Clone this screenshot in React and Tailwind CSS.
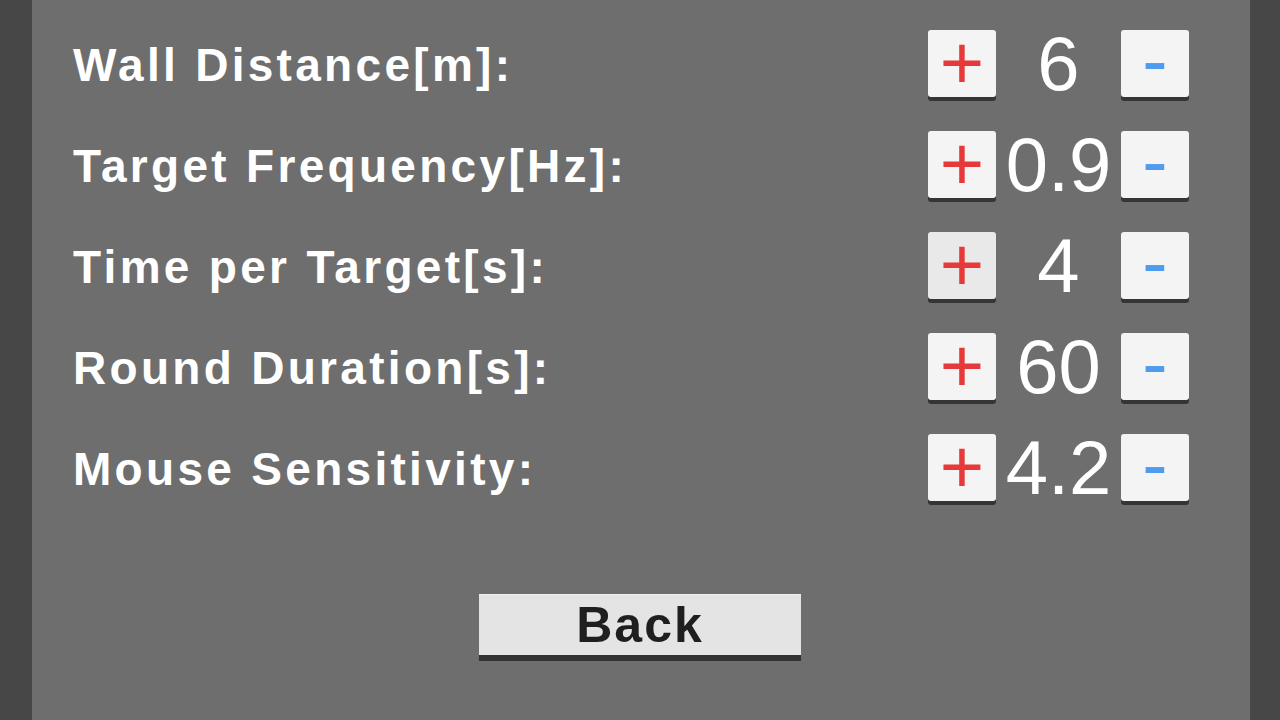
const settings = [
  { label: 'Wall Distance[m]:', value: '6' },
  { label: 'Target Frequency[Hz]:', value: '0.9' },
  { label: 'Time per Target[s]:', value: '4', hover: true },
  { label: 'Round Duration[s]:', value: '60' },
  { label: 'Mouse Sensitivity:', value: '4.2' },
]

function StepButton({ children, color, hover, offset }) {
  return (
    <button
      className={`w-[68px] h-[67px] rounded-[3px] flex items-center justify-center shadow-[0_4px_0_#353535] ${
        hover ? 'bg-[#e9e9e9]' : 'bg-[#f4f4f4]'
      } ${color}`}
    >
      <span className={`text-[76px] leading-none font-['Liberation_Sans',sans-serif] ${offset}`}>
        {children}
      </span>
    </button>
  )
}

export default function App() {
  return (
    <div className="h-screen w-full bg-[#474747] flex overflow-hidden">
      <div className="ml-[32px] w-[1218px] h-full bg-[#6e6e6e] flex flex-col pl-[41px] pr-[61px] pt-[30px]">
        <div className="flex flex-col gap-[34px]">
          {settings.map((s) => (
            <div key={s.label} className="flex items-center justify-between h-[67px]">
              <span className="text-white font-bold text-[46px] tracking-[3.3px] font-['Liberation_Sans',sans-serif] leading-none mt-[2px]">
                {s.label}
              </span>
              <div className="flex items-center">
                <StepButton color="text-[#e63a3a]" hover={s.hover} offset="-mt-[2px]">+</StepButton>
                <span className="w-[125px] text-center text-white text-[76px] leading-none font-['Liberation_Sans',sans-serif]">
                  {s.value}
                </span>
                <StepButton color="text-[#4f9cef]" offset="-mt-[7px]">-</StepButton>
              </div>
            </div>
          ))}
        </div>
        <div className="flex justify-center mt-[93px] pl-[18px]">
          <button className="w-[322px] h-[61px] bg-[#e4e4e4] border-t border-[#f0f0f0] shadow-[0_6px_0_#333333] flex items-center justify-center">
            <span className="text-[#1f1f1f] font-bold text-[50px] tracking-[2px] font-['Liberation_Sans',sans-serif] leading-none">
              Back
            </span>
          </button>
        </div>
      </div>
    </div>
  )
}
